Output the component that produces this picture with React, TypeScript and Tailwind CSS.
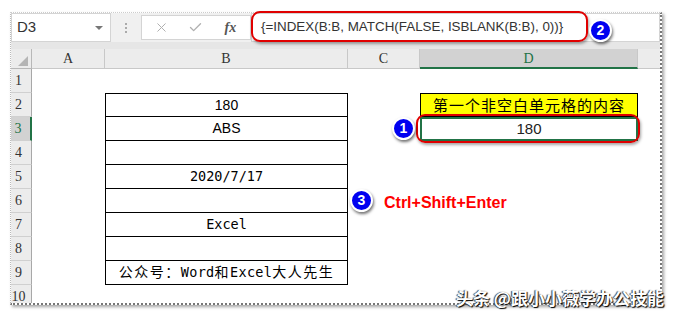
import { Check, X } from 'lucide-react'

const cols = 'grid-cols-[21px_73px_243px_72px_218px_1fr]'
const sans = "font-['Liberation_Sans','Noto_Sans_CJK_SC',sans-serif]"
const mono = "font-['DejaVu_Sans_Mono','Noto_Sans_CJK_SC',monospace]"
const serif = "font-['Liberation_Serif',serif]"

function Badge({ n, className }: { n: number; className: string }) {
  return (
    <div
      className={`absolute flex h-[23px] w-[23px] items-center justify-center rounded-full border-2 border-white bg-[#0000f0] text-[14px] font-bold text-white shadow-[1px_2px_3px_rgba(0,0,0,0.55)] ${sans} ${className}`}
    >
      {n}
    </div>
  )
}

function RowHead({ n, active }: { n: number; active?: boolean }) {
  return (
    <div
      className={`flex items-center justify-center border-b border-[#d0d0d0] pr-[5px] text-[14px] ${serif} ${
        active
          ? 'border-r-2 border-r-[#217346] bg-[#d2d2d2] text-[#217346]'
          : 'border-r border-r-[#a8a8a8] bg-[#ececec] text-[#333]'
      }`}
    >
      {n}
    </div>
  )
}

function BCell({ children, first }: { children?: React.ReactNode; first?: boolean }) {
  return (
    <div
      className={`flex items-center justify-center border-x border-b border-black text-[13.5px] text-black ${first ? 'border-t' : ''}`}
    >
      {children}
    </div>
  )
}

export default function App() {
  const rows = [1, 2, 3, 4, 5, 6, 7, 8, 9, 10]
  const bContent: Record<number, React.ReactNode> = {
    2: <span className={`${sans} text-[14px]`}>180</span>,
    3: <span className={`${sans} text-[14px]`}>ABS</span>,
    4: null,
    5: <span className={mono}>2020/7/17</span>,
    6: null,
    7: <span className={mono}>Excel</span>,
    8: null,
    9: (
      <span className={`${mono} tracking-[0.3px]`}>
        <span className="text-[14px] tracking-[1.5px]">公众号：</span>Word
        <span className="text-[14px] tracking-[1.5px]">和</span>Excel
        <span className="text-[14px] tracking-[1.5px]">大人先生</span>
      </span>
    ),
  }

  return (
    <div className="relative h-[317px] w-[674px] overflow-hidden bg-white">
      <div className="ml-[10px] mt-[12px] flex h-[293px] w-[652px] flex-col overflow-hidden border-b-2 border-l border-r-2 border-t border-dotted border-b-[#777] border-l-[#bbb] border-r-[#777] border-t-[#ccc] bg-white shadow-[2px_2px_3px_rgba(0,0,0,0.35)]">
        {/* formula bar */}
        <div className="flex h-[29px] shrink-0 bg-[#f0f0f0]">
          <div className={`flex w-[100px] items-center justify-between border border-[#d4d4d4] bg-white pl-[5px] pr-[7px] text-[15px] text-[#333] ${sans}`}>
            <span>D3</span>
            <span className="h-0 w-0 border-x-[4px] border-t-[4px] border-x-transparent border-t-[#777]" />
          </div>
          <div className="flex w-[30px] flex-col items-center justify-center gap-[2px]">
            <span className="h-[2px] w-[2px] bg-[#aaa]" />
            <span className="h-[2px] w-[2px] bg-[#aaa]" />
            <span className="h-[2px] w-[2px] bg-[#aaa]" />
          </div>
          <div className="my-[2px] flex w-[110px] items-center border border-[#d4d4d4] bg-white">
            <div className="flex w-[40px] justify-center">
              <X size={15} strokeWidth={1.6} color="#b0b0b0" />
            </div>
            <div className="flex w-[30px] justify-center">
              <Check size={15} strokeWidth={2.2} color="#b0b0b0" />
            </div>
            <div className={`flex w-[40px] justify-center text-[14px] font-bold italic text-[#555] ${serif}`}>fx</div>
          </div>
          <div className={`flex flex-1 items-center border border-[#d4d4d4] bg-white pl-[9px] text-[13.4px] text-[#333] ${sans}`}>
            {'{=INDEX(B:B, MATCH(FALSE, ISBLANK(B:B), 0))}'}
          </div>
        </div>
        <div className="h-[7px] shrink-0 bg-[#e6e6e6]" />

        {/* sheet */}
        <div className={`grid ${cols} grid-rows-[20px_repeat(10,24px)]`}>
          <div className="relative border-b border-r border-[#b8b8b8] bg-[#ececec]">
            <span className="absolute bottom-[2px] right-[3px] h-0 w-0 border-b-[10px] border-l-[10px] border-b-[#b5b5b5] border-l-transparent" />
          </div>
          <div className={`flex items-center justify-center border-b border-r border-[#c8c8c8] bg-[#ececec] text-[14px] text-[#333] ${serif}`}>A</div>
          <div className={`flex items-center justify-center border-b border-r border-[#c8c8c8] bg-[#ececec] text-[14px] text-[#333] ${serif}`}>B</div>
          <div className={`flex items-center justify-center border-b border-r border-[#c8c8c8] bg-[#ececec] text-[14px] text-[#333] ${serif}`}>C</div>
          <div className={`flex items-center justify-center border-b-2 border-r border-b-[#217346] border-r-[#c8c8c8] bg-[#d2d2d2] text-[14px] text-[#217346] ${serif}`}>D</div>
          <div className="border-b border-[#c8c8c8] bg-[#ececec]" />

          {rows.map((r) => (
            <div key={r} className="contents">
              <RowHead n={r} active={r === 3} />
              <div />
              {r >= 2 && r <= 9 ? <BCell first={r === 2}>{bContent[r]}</BCell> : <div />}
              <div />
              {r === 2 ? (
                <div className="flex items-center justify-center border border-black bg-[#ffff00] text-[15px] tracking-[1px] text-black font-['Noto_Sans_CJK_SC',sans-serif]">
                  第一个非空白单元格的内容
                </div>
              ) : r === 3 ? (
                <div className={`flex items-center justify-center border-2 border-[#217346] text-[15px] text-[#222] ${sans}`}>180</div>
              ) : (
                <div />
              )}
              <div />
            </div>
          ))}
        </div>
      </div>

      {/* annotations */}
      <div className="absolute left-[251px] top-[11px] h-[31px] w-[337px] rounded-[9px] border-2 border-[#e00000] shadow-[1px_2px_3px_rgba(0,0,0,0.35)]" />
      <Badge n={2} className="left-[589px] top-[19px]" />

      <div className="absolute left-[416px] top-[114px] h-[29px] w-[224px] rounded-[9px] border-2 border-[#e00000] shadow-[1px_2px_3px_rgba(0,0,0,0.35)]" />
      <Badge n={1} className="left-[392px] top-[117px]" />

      <Badge n={3} className="left-[350px] top-[189px]" />
      <div className={`absolute left-[384px] top-[191px] text-[16px] font-bold text-[#ff0000] ${sans}`}>Ctrl+Shift+Enter</div>

      <div className="absolute right-[10px] top-[285px] text-[17px] font-bold text-white font-['Noto_Sans_CJK_SC',sans-serif] [text-shadow:1px_1px_1px_#000,-1px_0_1px_#333]">
        头条 @跟小小薇学办公技能
      </div>
    </div>
  )
}
